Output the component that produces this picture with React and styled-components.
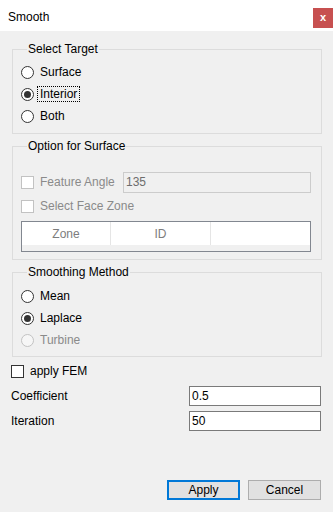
import React from 'react';
import styled, { createGlobalStyle } from 'styled-components';

const Global = createGlobalStyle`
  html, body { margin: 0; padding: 0; background: #f0f0f0; }
  body {
    font-family: "Liberation Sans", Arial, sans-serif;
    font-size: 12px;
    color: #000;
  }
  * { box-sizing: border-box; }
`;

const Window = styled.div`
  width: 333px;
  height: 512px;
  background: #f0f0f0;
  display: flex;
  flex-direction: column;
  overflow: hidden;
`;

const TitleBar = styled.div`
  height: 31px;
  flex-shrink: 0;
  background: #fff;
  display: flex;
  justify-content: space-between;
  align-items: flex-start;
`;

const Title = styled.div`
  padding: 10px 0 0 8px;
  line-height: 14px;
  font-size: 12px;
  color: #000;
`;

const CloseBtn = styled.div`
  margin-top: 8px;
  width: 20px;
  height: 20px;
  background: #c75050;
  color: #fff;
  font-weight: bold;
  font-size: 11px;
  line-height: 1;
  display: flex;
  align-items: center;
  justify-content: center;
  padding-bottom: 2px;
`;

const Body = styled.div`
  flex: 1;
  display: flex;
  flex-direction: column;
  padding: 0 0 12px 0;
`;

const Group = styled.fieldset`
  margin: ${p => p.$mt}px 11px 0 12px;
  padding: ${p => p.$pt}px 10px ${p => p.$pb}px 8px;
  border: 1px solid #dcdcdc;
  min-width: 0;
  display: flex;
  flex-direction: column;
  gap: ${p => p.$gap || 0}px;
`;

const Legend = styled.legend`
  margin-left: 6px;
  padding: 0 1px;
  line-height: 14px;
  font-size: 12px;
  color: #000;
`;

const OptionRow = styled.div`
  height: 22px;
  display: flex;
  align-items: center;
  color: ${p => (p.$disabled ? '#8a8a8a' : '#000')};
`;

const RadioCircle = styled.span`
  width: 13px;
  height: 13px;
  flex-shrink: 0;
  border-radius: 50%;
  border: 1px solid ${p => (p.$disabled ? '#c2c2c2' : '#333')};
  background: ${p => (p.$disabled ? '#f6f6f6' : '#fff')};
  display: flex;
  align-items: center;
  justify-content: center;
  &::after {
    content: '';
    display: ${p => (p.$checked ? 'block' : 'none')};
    width: 7px;
    height: 7px;
    border-radius: 50%;
    background: #333;
  }
`;

const CheckBox = styled.span`
  width: 13px;
  height: 13px;
  flex-shrink: 0;
  border: 1px solid ${p => (p.$disabled ? '#c2c2c2' : '#333')};
  background: #fff;
`;

const OptLabel = styled.span`
  margin-left: ${p => (p.$focus ? 3 : 6)}px;
  line-height: 14px;
  padding: 0 ${p => (p.$focus ? 2 : 0)}px;
  border: ${p => (p.$focus ? '1px dotted #000' : 'none')};
  ${p => p.$width ? `width: ${p.$width}px;` : ''}
`;

const TextInput = styled.div`
  flex: 1;
  height: ${p => p.$h || 20}px;
  border: 1px solid ${p => (p.$disabled ? '#cccccc' : '#7a7a7a')};
  background: ${p => (p.$disabled ? '#f0f0f0' : '#fff')};
  color: ${p => (p.$disabled ? '#6d6d6d' : '#000')};
  display: flex;
  align-items: center;
  padding-left: 2px;
  line-height: 14px;
`;

const Grid = styled.div`
  margin-top: 2px;
  height: 31px;
  border: 1px solid #828790;
  background: #f0f0f0;
  display: flex;
  flex-direction: column;
`;

const HeaderRow = styled.div`
  height: 23px;
  display: flex;
  background: #fff;
`;

const HeaderCell = styled.div`
  width: ${p => (p.$w ? `${p.$w}px` : 'auto')};
  flex: ${p => (p.$w ? 'none' : 1)};
  border-right: ${p => (p.$last ? 'none' : '1px solid #e5e5e5')};
  display: flex;
  align-items: center;
  justify-content: center;
  color: #7d7d7d;
`;

const FormRow = styled.div`
  margin: ${p => p.$mt}px 12px 0 11px;
  height: 22px;
  display: flex;
  align-items: center;
`;

const FieldLabel = styled.span`
  width: 178px;
  flex-shrink: 0;
  line-height: 14px;
`;

const ButtonBar = styled.div`
  margin-top: auto;
  margin-right: 12px;
  display: flex;
  justify-content: flex-end;
  gap: 8px;
`;

const Button = styled.button`
  width: 73px;
  height: 20px;
  padding: 0;
  font-family: inherit;
  font-size: 12px;
  color: #000;
  background: #e1e1e1;
  border: ${p => (p.$default ? '2px solid #0078d7' : '1px solid #adadad')};
  display: flex;
  align-items: center;
  justify-content: center;
`;

function Radio({ label, checked, disabled, focus }) {
  return (
    <OptionRow $disabled={disabled}>
      <RadioCircle $checked={checked} $disabled={disabled} />
      <OptLabel $focus={focus}>{label}</OptLabel>
    </OptionRow>
  );
}

export default function App() {
  return (
    <>
      <Global />
      <Window>
        <TitleBar>
          <Title>Smooth</Title>
          <CloseBtn>x</CloseBtn>
        </TitleBar>
        <Body>
          <Group $mt={11} $pt={5} $pb={6}>
            <Legend>Select Target</Legend>
            <Radio label="Surface" />
            <Radio label="Interior" checked focus />
            <Radio label="Both" />
          </Group>

          <Group $mt={5} $pt={18} $pb={7} $gap={2}>
            <Legend>Option for Surface</Legend>
            <OptionRow $disabled>
              <CheckBox $disabled />
              <OptLabel $width={83}>Feature Angle</OptLabel>
              <TextInput $disabled $h={21}>135</TextInput>
            </OptionRow>
            <OptionRow $disabled>
              <CheckBox $disabled />
              <OptLabel>Select Face Zone</OptLabel>
            </OptionRow>
            <Grid>
              <HeaderRow>
                <HeaderCell $w={89}>Zone</HeaderCell>
                <HeaderCell $w={100}>ID</HeaderCell>
                <HeaderCell $last />
              </HeaderRow>
            </Grid>
          </Group>

          <Group $mt={5} $pt={6} $pb={5}>
            <Legend>Smoothing Method</Legend>
            <Radio label="Mean" />
            <Radio label="Laplace" checked />
            <Radio label="Turbine" disabled />
          </Group>

          <FormRow $mt={3}>
            <CheckBox />
            <OptLabel>apply FEM</OptLabel>
          </FormRow>
          <FormRow $mt={3}>
            <FieldLabel>Coefficient</FieldLabel>
            <TextInput>0.5</TextInput>
          </FormRow>
          <FormRow $mt={3}>
            <FieldLabel>Iteration</FieldLabel>
            <TextInput>50</TextInput>
          </FormRow>

          <ButtonBar>
            <Button $default>Apply</Button>
            <Button>Cancel</Button>
          </ButtonBar>
        </Body>
      </Window>
    </>
  );
}
